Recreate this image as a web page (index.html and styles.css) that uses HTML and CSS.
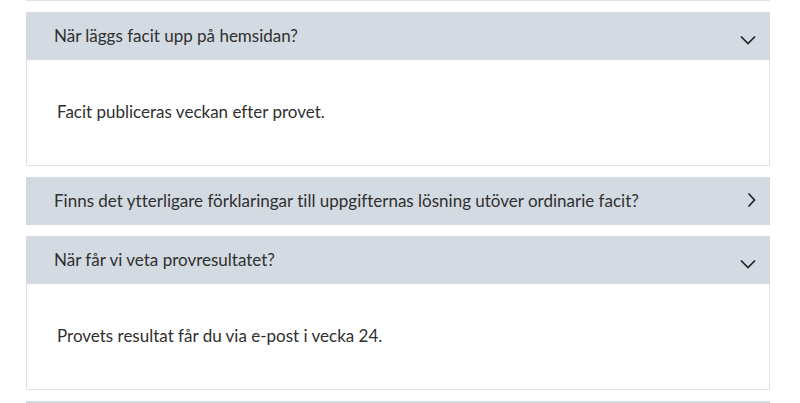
FILE: index.html
```html
<!DOCTYPE html>
<html lang="sv">
<head>
<meta charset="utf-8">
<link rel="stylesheet" href="styles.css">
</head>
<body>
<div class="faq">
  <div class="prev"></div>
  <div class="item">
    <div class="head">
      <span class="q">När läggs facit upp på hemsidan?</span>
      <svg class="ico down" width="16" height="10" viewBox="0 0 16 10"><path d="M1 1.5 L8 8.5 L15 1.5" fill="none" stroke="#222" stroke-width="1.7"/></svg>
    </div>
    <div class="body"><p>Facit publiceras veckan efter provet.</p></div>
  </div>
  <div class="item closed">
    <div class="head">
      <span class="q">Finns det ytterligare förklaringar till uppgifternas lösning utöver ordinarie facit?</span>
      <svg class="ico right" width="16" height="16" viewBox="0 0 16 16"><path d="M8.5 1.5 L14.5 8 L8.5 14.5" fill="none" stroke="#222" stroke-width="1.7"/></svg>
    </div>
  </div>
  <div class="item">
    <div class="head">
      <span class="q">När får vi veta provresultatet?</span>
      <svg class="ico down" width="16" height="10" viewBox="0 0 16 10"><path d="M1 1.5 L8 8.5 L15 1.5" fill="none" stroke="#222" stroke-width="1.7"/></svg>
    </div>
    <div class="body"><p>Provets resultat får du via e-post i vecka 24.</p></div>
  </div>
  <div class="item">
    <div class="head"></div>
  </div>
</div>
</body>
</html>
```
FILE: styles.css
```css
html, body {
  margin: 0;
  padding: 0;
  background: #ffffff;
}
body {
  font-family: Lato, "Liberation Sans", sans-serif;
  font-variant-ligatures: none;
  color: #303030;
  overflow: hidden;
  height: 403px;
}
.faq {
  margin-left: 26px;
  width: 744px;
}
.prev {
  height: 0;
  border-bottom: 1px solid #dfe3e8;
  margin-bottom: 11px;
}
.item {
  margin-bottom: 11px;
}
.head {
  background: #d3dae2;
  height: 48px;
  display: flex;
  align-items: center;
  justify-content: space-between;
  padding: 0 14px 0 28px;
  font-size: 17px;
}
.q {
  line-height: 24px;
}
.ico {
  display: block;
}
.ico.down {
  margin-top: 8px;
}
.ico.right {
  margin-top: -3px;
}
.body {
  border: 1px solid #dfe3e8;
  border-top: none;
  padding: 40px 30px 41px 30px;
  font-size: 17px;
}
.body p {
  margin: 0;
  line-height: 24px;
}
```
